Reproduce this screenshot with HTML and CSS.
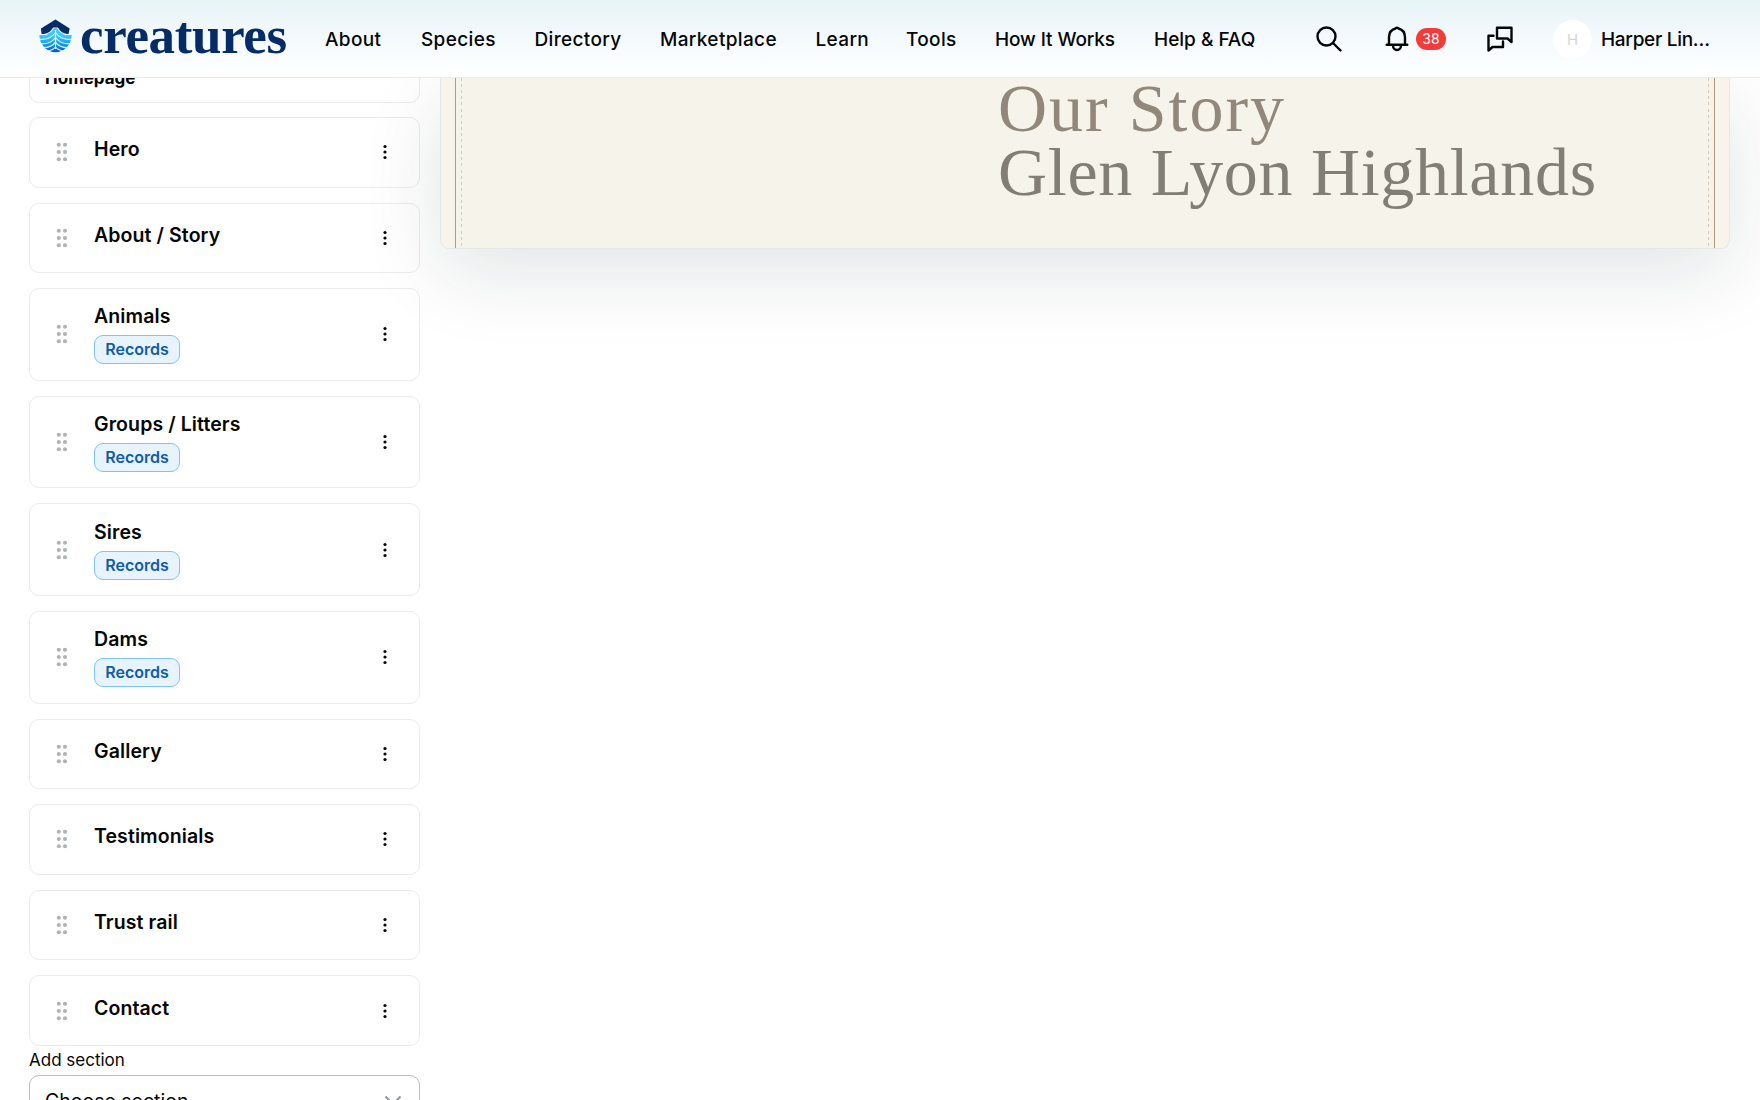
FILE: index.html
```html
<!DOCTYPE html>
<html lang="en">

<head>
    <meta charset="UTF-8">
    <meta name="viewport" content="width=device-width, initial-scale=1.0">
    <title>Creatures - Website builder</title>
    <link rel="stylesheet" href="styles.css">
</head>

<body>

    <!-- Shared icons -->
    <svg class="hidden">
        <symbol id="icon-grip" viewBox="0 0 12 20">
            <circle cx="2.8" cy="2.8" r="2.05" /><circle cx="9" cy="2.8" r="2.05" />
            <circle cx="2.8" cy="10" r="2.05" /><circle cx="9" cy="10" r="2.05" />
            <circle cx="2.8" cy="17.2" r="2.05" /><circle cx="9" cy="17.2" r="2.05" />
        </symbol>
        <symbol id="icon-dots" viewBox="0 0 4 16">
            <circle cx="2" cy="2.5" r="1.6" /><circle cx="2" cy="8" r="1.6" /><circle cx="2" cy="13.5" r="1.6" />
        </symbol>
    </svg>

    <!-- Header -->
    <header class="header">
        <a href="#" class="logo">
            <svg class="logo-mark" viewBox="0 0 33 34">
                <defs>
                    <linearGradient id="water" gradientUnits="userSpaceOnUse" x1="0" y1="10" x2="0" y2="33">
                        <stop offset="0.3" stop-color="#3cc8fc" />
                        <stop offset="0.65" stop-color="#12a0ea" />
                        <stop offset="1" stop-color="#0a4fd3" />
                    </linearGradient>
                </defs>
                <path d="M16.500 .5 30.700 9.500 29.500 15H2.500L2 9.500Z" fill="#062c68" />
                <path d="M.3 16H6.500Q11 14.500 13.500 9.500H19.500Q22 14.500 26.500 16H32.700Q32.300 23.500 27.500 28.500Q22.500 33.300 16.500 33.300Q10.500 33.300 5.500 28.500Q.7 23.500 .3 16Z" fill="url(#water)" />
                <g fill="none" stroke="#f1f9fc" stroke-width="1.1">
                    <path d="M0 15.500H5Q11.500 14.500 14.500 9H18.500Q21.500 14.500 28 15.500H33" />
                    <path d="M0 20.300H5Q12 19.500 16.500 13.500Q21 19.500 28 20.300H33" />
                    <path d="M1 24.800H5Q12.500 24 16.500 18.500Q20.500 24 28 24.800H32" />
                    <path d="M4 28.600Q12.500 28.500 16.500 23.300Q20.500 28.500 29 28.600" />
                    <path d="M8 32Q13.500 31.500 16.500 28Q19.500 31.500 25 32" />
                    <path d="M16.500 11V30" />
                </g>
            </svg>
            <span class="logo-text">creatures</span>
        </a>

        <nav class="nav">
            <a href="#" class="nav-about">About</a>
            <a href="#" class="nav-species">Species</a>
            <a href="#" class="nav-directory">Directory</a>
            <a href="#" class="nav-marketplace">Marketplace</a>
            <a href="#" class="nav-learn">Learn</a>
            <a href="#" class="nav-tools">Tools</a>
            <a href="#" class="nav-how">How It Works</a>
            <a href="#" class="nav-help">Help &amp; FAQ</a>
        </nav>

        <div class="actions">
            <svg class="icon icon-search" viewBox="0 0 26 26">
                <circle cx="10.500" cy="10.500" r="9" />
                <path d="M17 17 24.500 24.500" />
            </svg>
            <div class="alerts">
                <svg class="icon icon-bell" viewBox="0 0 24 26">
                    <path d="M1.700 18.700H22.300M4 18.500V11C4 6.500 7 3.500 10.500 2.500Q12 1 13.500 2.500C17 3.500 20 6.500 20 11V18.500M8 19.500A4 4.500 0 0 0 16 19.500" />
                </svg>
                <span class="badge">38</span>
            </div>
            <svg class="icon icon-chat" viewBox="0 0 26 26">
                <path d="M10 1.700H24.500V16L20.500 12.500H10ZM6.500 9.700H1.500V24.500L5.500 21H16V15.500" />
            </svg>
            <div class="user">
                <span class="avatar">H</span>
                <span class="user-name">Harper Lin…</span>
            </div>
        </div>
    </header>

    <div class="builder">
        <!-- Section list -->
        <aside class="sidebar">
            <div class="page-card">Homepage</div>

            <div class="section">
                <svg class="grip"><use href="#icon-grip" /></svg>
                <div class="section-info"><h3>Hero</h3></div>
                <svg class="dots"><use href="#icon-dots" /></svg>
            </div>
            <div class="section">
                <svg class="grip"><use href="#icon-grip" /></svg>
                <div class="section-info"><h3>About / Story</h3></div>
                <svg class="dots"><use href="#icon-dots" /></svg>
            </div>
            <div class="section tall">
                <svg class="grip"><use href="#icon-grip" /></svg>
                <div class="section-info"><h3>Animals</h3><span class="tag">Records</span></div>
                <svg class="dots"><use href="#icon-dots" /></svg>
            </div>
            <div class="section tall">
                <svg class="grip"><use href="#icon-grip" /></svg>
                <div class="section-info"><h3>Groups / Litters</h3><span class="tag">Records</span></div>
                <svg class="dots"><use href="#icon-dots" /></svg>
            </div>
            <div class="section tall">
                <svg class="grip"><use href="#icon-grip" /></svg>
                <div class="section-info"><h3>Sires</h3><span class="tag">Records</span></div>
                <svg class="dots"><use href="#icon-dots" /></svg>
            </div>
            <div class="section tall">
                <svg class="grip"><use href="#icon-grip" /></svg>
                <div class="section-info"><h3>Dams</h3><span class="tag">Records</span></div>
                <svg class="dots"><use href="#icon-dots" /></svg>
            </div>
            <div class="section">
                <svg class="grip"><use href="#icon-grip" /></svg>
                <div class="section-info"><h3>Gallery</h3></div>
                <svg class="dots"><use href="#icon-dots" /></svg>
            </div>
            <div class="section">
                <svg class="grip"><use href="#icon-grip" /></svg>
                <div class="section-info"><h3>Testimonials</h3></div>
                <svg class="dots"><use href="#icon-dots" /></svg>
            </div>
            <div class="section">
                <svg class="grip"><use href="#icon-grip" /></svg>
                <div class="section-info"><h3>Trust rail</h3></div>
                <svg class="dots"><use href="#icon-dots" /></svg>
            </div>
            <div class="section">
                <svg class="grip"><use href="#icon-grip" /></svg>
                <div class="section-info"><h3>Contact</h3></div>
                <svg class="dots"><use href="#icon-dots" /></svg>
            </div>

            <div class="add-label">Add section</div>
            <div class="select">
                <span>Choose section</span>
                <svg class="chevron" viewBox="0 0 18 12"><path d="M1.500 1.500 9 9 16.500 1.500" /></svg>
            </div>
        </aside>

        <!-- Preview -->
        <main class="preview">
            <div class="rail"></div>
            <div class="stitch"></div>
            <h1 class="story">
                <span class="story-top">Our Story</span>
                <span class="story-name">Glen Lyon Highlands</span>
            </h1>
            <div class="stitch"></div>
            <div class="rail rail-right"></div>
        </main>
    </div>

</body>

</html>
```

FILE: styles.css
```css
* {
    box-sizing: border-box;
}

body {
    font-family: Inter, "Liberation Sans", sans-serif;
    background-color: white;
    color: #050606;
    height: 1100px;
    margin: 0;
    overflow: hidden;
}

.hidden {
    display: none;
}

/* Header */
.header {
    position: relative;
    z-index: 2;
    display: flex;
    align-items: center;
    height: 78px;
    padding-left: 39px;
    background: linear-gradient(#e8f4f7, #f5fafd 55%, #fff);
    border-bottom: 1px solid #e9ebef;
}

.header a {
    color: inherit;
    text-decoration: none;
}

.logo {
    display: flex;
    align-items: center;
    width: 286px;
}

.logo-mark {
    width: 33px;
    height: 34px;
    margin-top: -6px;
}

.header .logo-text {
    margin: -7px 0 0 8px;
    font-family: "Liberation Serif", serif;
    font-weight: bold;
    font-size: 53px;
    line-height: 60px;
    letter-spacing: -0.35px;
    color: #062c68;
}

.nav {
    display: flex;
    margin-top: 2px;
    font-size: 19px;
    font-weight: 500;
    line-height: 24px;
    letter-spacing: 0.35px;
    white-space: nowrap;
}

.nav-about { width: 96px; }
.nav-species { width: 113.500px; }
.nav-directory { width: 125.500px; }
.nav-marketplace { width: 155.500px; }
.nav-learn { width: 90.500px; }
.nav-tools { width: 89px; }
.nav-how { width: 159px; letter-spacing: -0.1px; }
.nav-help { width: 160px; letter-spacing: 0; }

.actions {
    display: flex;
    align-items: center;
    margin-top: 1px;
}

.icon {
    flex: none;
    width: 26px;
    height: 26px;
    fill: none;
    stroke: #050606;
    stroke-width: 2.4;
    stroke-linecap: round;
    stroke-linejoin: round;
}

.icon-search {
    margin-left: 2px;
}

.alerts {
    display: flex;
    align-items: center;
    margin-left: 43px;
}

.icon-bell {
    width: 24px;
}

.badge {
    width: 30px;
    height: 22px;
    margin-left: 7px;
    border-radius: 11px;
    background-color: #f23c3c;
    color: white;
    font-size: 14px;
    line-height: 22px;
    text-align: center;
}

.icon-chat {
    margin-left: 41px;
}

.user {
    display: flex;
    align-items: center;
    margin-left: 40px;
}

.avatar {
    width: 39px;
    height: 39px;
    border-radius: 50%;
    background-color: white;
    color: #d3d6d9;
    font-size: 15px;
    line-height: 40px;
    text-align: center;
}

.user-name {
    margin-left: 9px;
    font-size: 19px;
    font-weight: 500;
    letter-spacing: -0.3px;
    white-space: nowrap;
}

/* Layout */
.builder {
    display: flex;
    align-items: flex-start;
    gap: 20px;
    padding-left: 29px;
}

.sidebar {
    flex: none;
    width: 391px;
}

.page-card {
    height: 25px;
    margin-bottom: 14px;
    padding-left: 15px;
    border: 1px solid #ebebed;
    border-top: none;
    border-radius: 0 0 10px 10px;
    font-size: 17px;
    font-weight: 700;
    line-height: 0;
}

.section {
    display: flex;
    align-items: center;
    height: 70.600px;
    margin-bottom: 15px;
    padding: 0 32px 0 26px;
    border: 1px solid #ebebed;
    border-radius: 10px;
}

.section.tall {
    height: 92.600px;
}

.grip {
    width: 12px;
    height: 20px;
    fill: #aeb2b5;
}

.section-info {
    flex: 1;
    margin-left: 26px;
}

h3 {
    margin: -6px 0 0;
    font-size: 19.500px;
    font-weight: 600;
    line-height: 24px;
    letter-spacing: 0.1px;
}

.tall h3 {
    margin: 0 0 7px;
}

.tag {
    display: block;
    width: 86px;
    height: 29px;
    border: 1px solid #7cc4fb;
    border-radius: 9px;
    background-color: #e7f4fe;
    color: #105cab;
    font-size: 16px;
    font-weight: 600;
    line-height: 27px;
    text-align: center;
}

.dots {
    width: 4px;
    height: 16px;
    fill: #050606;
}

.add-label {
    margin-top: -12px;
    font-size: 17px;
    line-height: 22px;
}

.select {
    display: flex;
    justify-content: space-between;
    height: 52px;
    margin-top: 4px;
    padding: 14px 17px 0 15px;
    border: 1.500px solid #b9bfc5;
    border-radius: 10px;
    font-size: 19.500px;
    line-height: 22px;
}

.chevron {
    width: 18px;
    height: 12px;
    margin-top: 5px;
    fill: none;
    stroke: #8f959a;
    stroke-width: 2;
}

/* Preview */
.preview {
    display: flex;
    width: 1290px;
    height: 171px;
    border: 1px solid #e3e8e9;
    border-top: none;
    border-radius: 0 0 9px 9px;
    background-color: #f6f3eb;
    box-shadow: 0 24px 80px rgba(20, 35, 38, 0.12);
}

.rail {
    width: 15px;
    border-right: 1px solid #b09882;
    border-bottom-left-radius: 8px;
    background-color: #f8f3eb;
}

.rail-right {
    border-right: none;
    border-left: 1px solid #b09882;
    border-radius: 0 0 8px 0;
}

.stitch {
    width: 1px;
    margin: 0 5px;
    background: repeating-linear-gradient(#d6c9bb 0 3px, transparent 3px 6.100px);
}

.story {
    flex: 1;
    margin: -2px 0 0;
    padding-left: 531px;
    font-family: "Liberation Serif", serif;
    font-size: 68px;
    font-weight: normal;
    line-height: 64px;
    white-space: nowrap;
}

.story span {
    display: block;
}

.story-top {
    color: #92877b;
    letter-spacing: 2px;
}

.story-name {
    color: #827e76;
    letter-spacing: 0.700px;
}
```
